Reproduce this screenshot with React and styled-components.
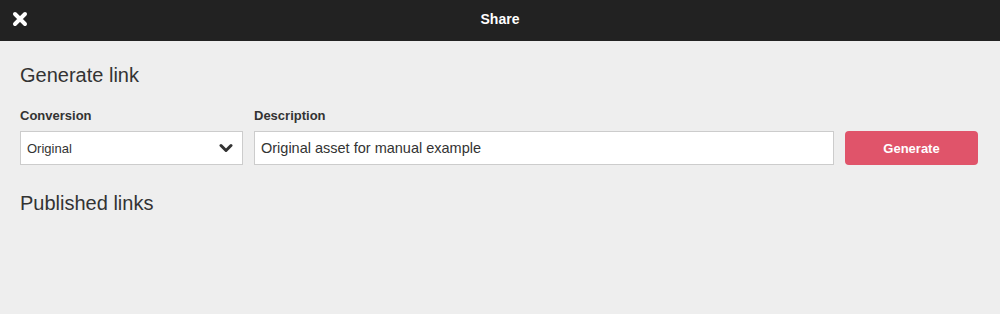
import React from "react";
import styled, { createGlobalStyle } from "styled-components";

const Global = createGlobalStyle`
  html, body { margin: 0; padding: 0; }
  body {
    background: #eeeeee;
    font-family: "Liberation Sans", Arial, Helvetica, sans-serif;
    color: #333333;
  }
`;

const Page = styled.div`
  width: 1000px;
  height: 314px;
  background: #eeeeee;
  display: flex;
  flex-direction: column;
`;

const Header = styled.header`
  height: 41px;
  background: #222222;
  display: flex;
  align-items: center;
  justify-content: center;
  position: relative;
`;

const CloseButton = styled.button`
  position: absolute;
  left: 12px;
  top: 11px;
  width: 16px;
  height: 16px;
  padding: 0;
  border: 0;
  background: none;
  display: flex;
  align-items: center;
  justify-content: center;
  cursor: pointer;
`;

const HeaderTitle = styled.h1`
  margin: 0;
  font-size: 14px;
  font-weight: bold;
  color: #ffffff;
  transform: translateY(-2px);
`;

const Body = styled.main`
  padding: 22px 22px 0 20px;
  display: flex;
  flex-direction: column;
`;

const SectionTitle = styled.h2`
  margin: 0;
  font-size: 20px;
  font-weight: normal;
  color: #333333;
  line-height: 24px;
`;

const FormRow = styled.div`
  display: flex;
  align-items: flex-end;
  gap: 11px;
  margin-top: 21px;
  margin-bottom: 26px;
`;

const Field = styled.div`
  display: flex;
  flex-direction: column;
  width: ${(p) => (p.$width ? `${p.$width}px` : "auto")};
  flex: ${(p) => (p.$grow ? "1 1 auto" : "0 0 auto")};
`;

const Label = styled.label`
  font-size: 13px;
  font-weight: bold;
  color: #333333;
  line-height: 16px;
  margin-bottom: 7px;
`;

const SelectBox = styled.div`
  height: 34px;
  box-sizing: border-box;
  border: 1px solid #cccccc;
  background: #ffffff;
  display: flex;
  align-items: center;
  justify-content: space-between;
  padding: 0 9px 0 6px;
  font-size: 13px;
  color: #333333;
`;

const TextInput = styled.input`
  height: 34px;
  box-sizing: border-box;
  border: 1px solid #cccccc;
  background: #ffffff;
  padding: 0 6px;
  font-family: "Liberation Sans", Arial, sans-serif;
  font-size: 14.5px;
  color: #333333;
  outline: none;
`;

const GenerateButton = styled.button`
  width: 133px;
  height: 34px;
  border: 0;
  border-radius: 4px;
  background: #e0546a;
  color: #ffffff;
  font-family: "Liberation Sans", Arial, sans-serif;
  font-size: 13px;
  font-weight: bold;
  cursor: pointer;
`;

const XIcon = () => (
  <svg width="16" height="16" viewBox="0 0 16 16">
    <path
      d="M3 3 L13 13 M13 3 L3 13"
      stroke="#ffffff"
      strokeWidth="4"
      strokeLinecap="round"
    />
  </svg>
);

const Chevron = () => (
  <svg width="14" height="10" viewBox="0 0 14 10">
    <path
      d="M2 2.5 L7 7.5 L12 2.5"
      stroke="#333333"
      strokeWidth="3"
      fill="none"
      strokeLinecap="round"
      strokeLinejoin="round"
    />
  </svg>
);

export default function App() {
  return (
    <>
      <Global />
      <Page>
        <Header>
          <CloseButton aria-label="Close">
            <XIcon />
          </CloseButton>
          <HeaderTitle>Share</HeaderTitle>
        </Header>
        <Body>
          <SectionTitle>Generate link</SectionTitle>
          <FormRow>
            <Field $width={223}>
              <Label>Conversion</Label>
              <SelectBox>
                <span>Original</span>
                <Chevron />
              </SelectBox>
            </Field>
            <Field $grow>
              <Label>Description</Label>
              <TextInput defaultValue="Original asset for manual example" />
            </Field>
            <GenerateButton>Generate</GenerateButton>
          </FormRow>
          <SectionTitle>Published links</SectionTitle>
        </Body>
      </Page>
    </>
  );
}
